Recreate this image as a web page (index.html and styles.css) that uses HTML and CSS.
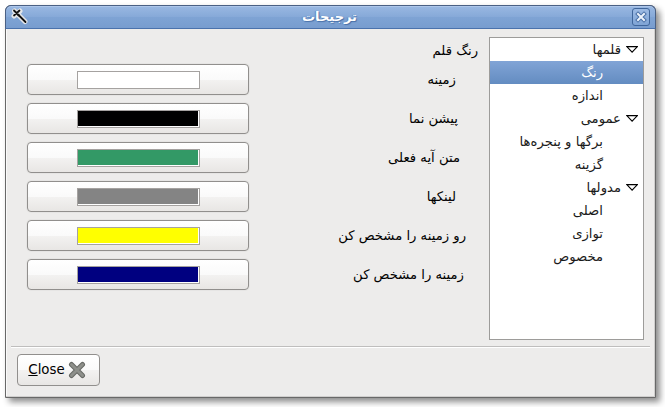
FILE: index.html
```
<!DOCTYPE html>
<html lang="fa">
<head>
<meta charset="utf-8">
<title>ترجیحات</title>
<link rel="stylesheet" href="styles.css">
</head>
<body>
<div class="window">
  <header class="titlebar">
    <svg class="wand" width="18" height="18" viewBox="0 0 18 18">
      <path class="halo" d="M3.5 3l10.5 10.5M9 3L3 8"/>
      <path class="ink" d="M3 2.5l5 5M8.5 2.5l-5.5 5"/>
      <path class="stick" d="M7 6.5l7.5 7.5"/>
    </svg>
    <h1 class="title" dir="rtl">ترجیحات</h1>
    <button class="close-box" aria-label="بستن">
      <svg width="12" height="12" viewBox="0 0 12 12">
        <path class="x-edge" d="M3 3l6 6M9 3L3 9"/>
        <path class="x-fill" d="M3 3l6 6M9 3L3 9"/>
      </svg>
    </button>
  </header>
  <main class="content">
    <section class="colors">
      <h2 class="heading" dir="rtl">رنگ قلم</h2>
      <div class="row"><button class="picker"><span class="swatch white"></span></button><span class="label l1" dir="rtl">زمینه</span></div>
      <div class="row"><button class="picker"><span class="swatch black"></span></button><span class="label l2" dir="rtl">پیشن نما</span></div>
      <div class="row"><button class="picker"><span class="swatch green"></span></button><span class="label l3" dir="rtl">متن آیه فعلی</span></div>
      <div class="row"><button class="picker"><span class="swatch gray"></span></button><span class="label l4" dir="rtl">لینکها</span></div>
      <div class="row"><button class="picker"><span class="swatch yellow"></span></button><span class="label l5" dir="rtl">رو زمینه را مشخص کن</span></div>
      <div class="row"><button class="picker"><span class="swatch navy"></span></button><span class="label l6" dir="rtl">زمینه را مشخص کن</span></div>
    </section>
    <ul class="tree" dir="rtl">
      <li class="group"><svg class="arrow" width="12" height="7" viewBox="0 0 12 7"><path d="M.8 .6h10.6L6.1 6.2z"/></svg><span>قلمها</span></li>
      <li class="item selected">رنگ</li>
      <li class="item">اندازه</li>
      <li class="group"><svg class="arrow" width="12" height="7" viewBox="0 0 12 7"><path d="M.8 .6h10.6L6.1 6.2z"/></svg><span>عمومی</span></li>
      <li class="item">برگها و پنجره‌ها</li>
      <li class="item">گزینه</li>
      <li class="group"><svg class="arrow" width="12" height="7" viewBox="0 0 12 7"><path d="M.8 .6h10.6L6.1 6.2z"/></svg><span>مدولها</span></li>
      <li class="item">اصلی</li>
      <li class="item">توازی</li>
      <li class="item">مخصوص</li>
    </ul>
  </main>
  <footer class="actions">
    <button class="close-btn"><span class="caption"><u>C</u>lose</span>
      <svg width="18" height="18" viewBox="0 0 18 18">
        <path class="c-edge" d="M3.5 3.5l11 11M14.5 3.5l-11 11"/>
        <path class="c-fill" d="M3.5 3.5l11 11M14.5 3.5l-11 11"/>
      </svg>
    </button>
  </footer>
</div>
</body>
</html>
```
FILE: styles.css
```
* { box-sizing: border-box; }
body {
  margin: 0;
  padding: 5px;
  height: 407px;
  overflow: hidden;
  background: #fff;
  color: #000;
  font: 13.2px/23px "DejaVu Sans", sans-serif;
}
button { font: inherit; color: inherit; margin: 0; padding: 0; }
h1, h2, ul { margin: 0; padding: 0; font-size: inherit; }
.window {
  width: 651px;
  height: 393px;
  border: 1px solid #686868;
  border-radius: 6px 6px 0 0;
  background: #edeceb;
  box-shadow: 4px 4px 6px rgba(0, 0, 0, .45), inset -1px -1px #d0cfce, inset 1px 0 #fafafa;
  display: flex;
  flex-direction: column;
}
.titlebar {
  height: 24px;
  margin: -1px -1px 0;
  border: 1px solid #4a6084;
  border-bottom-color: #4a72ac;
  border-radius: 6px 6px 0 0;
  background: linear-gradient(#99b8e2, #86a9d8 50%, #7ea3d4 52%, #789dcf);
  box-shadow: inset 0 1px #adc6ea;
  display: flex;
  align-items: center;
  justify-content: space-between;
  padding: 0 5px;
}
.wand { fill: none; stroke-linecap: round; }
.halo { stroke: #e4e6e8; stroke-width: 5; stroke-linejoin: round; }
.ink { stroke: #111; stroke-width: 1.8; }
.stick { stroke: #111; stroke-width: 1.8; }
.title {
  color: #fff;
  font-size: 13px;
  font-weight: bold;
  line-height: 22px;
  margin-right: 2px;
  text-shadow: 1px 1px 1px #4870a8, -1px 0 1px #5d84ba;
}
.close-box {
  width: 18px;
  height: 18px;
  border: 1px solid #40669b;
  border-radius: 3px;
  background: linear-gradient(#9dbbe4, #7fa4d5);
  display: flex;
  align-items: center;
  justify-content: center;
}
.x-edge, .x-fill { fill: none; stroke-linecap: square; }
.x-edge { stroke: #4a70a6; stroke-width: 4; }
.x-fill { stroke: #edf3fb; stroke-width: 2; }
.content {
  height: 310px;
  display: flex;
  justify-content: space-between;
  padding: 8px 11px 0 21px;
}
.colors { width: 451px; }
.heading { font-weight: normal; line-height: 27px; height: 27px; text-align: right; }
.row {
  height: 31px;
  margin-bottom: 8px;
  display: flex;
  align-items: center;
  justify-content: space-between;
}
.picker {
  width: 222px;
  height: 31px;
  border: 1px solid #918f8d;
  border-radius: 4px;
  background: linear-gradient(#fff, #fafafa 50%, #f3f2f1 51%, #e8e6e4);
  box-shadow: 0 0 0 1px #e6e5e4;
  display: flex;
  align-items: center;
  justify-content: center;
}
.swatch {
  width: 123px;
  height: 18px;
  border: 1px solid #a5a2a0;
  padding: 0 1px 1px 0;
  background-clip: content-box;
  box-shadow: inset -1px -1px #fff;
}
.white { background-color: #fff; }
.black { background-color: #000; }
.green { background-color: #339966; }
.gray { background-color: #848484; }
.yellow { background-color: #ff0; }
.navy { background-color: #000080; }
.label { white-space: nowrap; }
.l1 { margin-right: 22px; }
.l2 { margin-right: 20px; }
.l3 { margin-right: 18px; }
.l4 { margin-right: 22px; }
.l5 { margin-right: 12px; }
.l6 { margin-right: 14px; }
.tree {
  width: 155px;
  height: 303px;
  border: 1px solid #9d9c9a;
  background: #fff;
  color: #1a1a1a;
  list-style: none;
}
.tree li { height: 23px; white-space: nowrap; }
.group { display: flex; align-items: center; padding-right: 5px; gap: 5px; }
.arrow { fill: #fff; stroke: #000; stroke-width: 1.1; }
.item { padding-right: 40px; }
.selected { color: #fff; background: linear-gradient(#81a4d6, #638cc1); }
.actions {
  margin: 7px 5px 0;
  border-top: 1px solid #bfbebd;
  box-shadow: inset 0 1px #fff;
  padding: 7px 6px;
}
.close-btn {
  width: 83px;
  height: 32px;
  border: 1px solid #918f8d;
  border-radius: 4px;
  background: linear-gradient(#fff, #fafafa 50%, #f3f2f1 51%, #e8e6e4);
  display: flex;
  align-items: center;
  justify-content: center;
  gap: 3px;
  padding-right: 3px;
}
.caption { margin-top: -2px; font-size: 13.33px; }
.c-edge, .c-fill { fill: none; stroke-linecap: round; }
.c-edge { stroke: #666864; stroke-width: 5; }
.c-fill { stroke: #8e908b; stroke-width: 3; }
```
